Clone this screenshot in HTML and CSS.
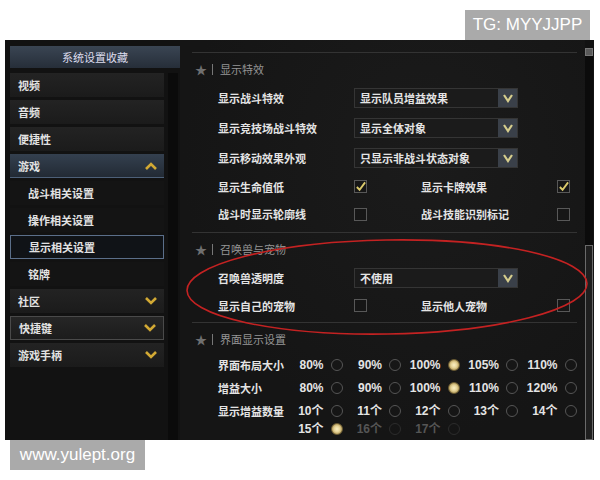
FILE: index.html
```html
<!DOCTYPE html>
<html lang="zh">
<head>
  <meta charset="UTF-8">
  <title>系统设置</title>
  <link rel="stylesheet" href="styles.css">
</head>
<body>
  <div class="top"><div class="tag">TG: MYYJJPP</div></div>

  <div class="game">
    <div class="sidebar">
      <div class="side-head">系统设置收藏</div>
      <div class="side-body">
        <div class="menu">
          <div class="item">视频</div>
          <div class="item">音频</div>
          <div class="item">便捷性</div>
          <div class="item open">游戏
            <svg class="chev" width="14" height="10" viewBox="0 0 14 10"><polyline points="2,8 7,3 12,8" fill="none" stroke="#d2a934" stroke-width="2.6"/></svg>
          </div>
          <div class="item sub">战斗相关设置</div>
          <div class="item sub">操作相关设置</div>
          <div class="item sub active">显示相关设置</div>
          <div class="item sub">铭牌</div>
          <div class="item">社区
            <svg class="chev" width="14" height="10" viewBox="0 0 14 10"><polyline points="2,2 7,7 12,2" fill="none" stroke="#d2a934" stroke-width="2.6"/></svg>
          </div>
          <div class="item hover">快捷键
            <svg class="chev" width="14" height="10" viewBox="0 0 14 10"><polyline points="2,2 7,7 12,2" fill="none" stroke="#d2a934" stroke-width="2.6"/></svg>
          </div>
          <div class="item">游戏手柄
            <svg class="chev" width="14" height="10" viewBox="0 0 14 10"><polyline points="2,2 7,7 12,2" fill="none" stroke="#d2a934" stroke-width="2.6"/></svg>
          </div>
        </div>
        <div class="track"></div>
      </div>
    </div>

    <div class="content">
      <div class="section">
        <div class="sec-head"><span class="star">★</span><span class="bar"></span>显示特效</div>
        <div class="rows">
          <div class="row">
            <span class="label">显示战斗特效</span>
            <div class="select"><span>显示队员增益效果</span><i class="sel-btn"><svg width="12" height="10" viewBox="0 0 12 10"><polyline points="2,2 6,8 10,2" fill="none" stroke="#d4cc8c" stroke-width="2.2"/></svg></i></div>
          </div>
          <div class="row">
            <span class="label">显示竞技场战斗特效</span>
            <div class="select"><span>显示全体对象</span><i class="sel-btn"><svg width="12" height="10" viewBox="0 0 12 10"><polyline points="2,2 6,8 10,2" fill="none" stroke="#d4cc8c" stroke-width="2.2"/></svg></i></div>
          </div>
          <div class="row">
            <span class="label">显示移动效果外观</span>
            <div class="select"><span>只显示非战斗状态对象</span><i class="sel-btn"><svg width="12" height="10" viewBox="0 0 12 10"><polyline points="2,2 6,8 10,2" fill="none" stroke="#d4cc8c" stroke-width="2.2"/></svg></i></div>
          </div>
          <div class="row short">
            <span class="label">显示生命值低</span>
            <span class="check on"><svg width="12" height="12" viewBox="0 0 12 12"><polyline points="2,6 5,9 11,1" fill="none" stroke="#dccb6c" stroke-width="2"/></svg></span>
            <span class="label second">显示卡牌效果</span>
            <span class="check on"><svg width="12" height="12" viewBox="0 0 12 12"><polyline points="2,6 5,9 11,1" fill="none" stroke="#dccb6c" stroke-width="2"/></svg></span>
          </div>
          <div class="row short">
            <span class="label">战斗时显示轮廓线</span>
            <span class="check"></span>
            <span class="label second">战斗技能识别标记</span>
            <span class="check"></span>
          </div>
        </div>
      </div>

      <div class="section">
        <div class="sec-head"><span class="star">★</span><span class="bar"></span>召唤兽与宠物</div>
        <div class="rows">
          <div class="row">
            <span class="label">召唤兽透明度</span>
            <div class="select"><span>不使用</span><i class="sel-btn"><svg width="12" height="10" viewBox="0 0 12 10"><polyline points="2,2 6,8 10,2" fill="none" stroke="#d4cc8c" stroke-width="2.2"/></svg></i></div>
          </div>
          <div class="row tiny">
            <span class="label">显示自己的宠物</span>
            <span class="check"></span>
            <span class="label second">显示他人宠物</span>
            <span class="check"></span>
          </div>
        </div>
      </div>

      <div class="section">
        <div class="sec-head"><span class="star">★</span><span class="bar"></span>界面显示设置</div>
        <div class="rows">
          <div class="radio-row">
            <span class="label">界面布局大小</span>
            <span class="opt">80%<i class="radio"></i></span>
            <span class="opt">90%<i class="radio"></i></span>
            <span class="opt">100%<i class="radio on"></i></span>
            <span class="opt">105%<i class="radio"></i></span>
            <span class="opt">110%<i class="radio"></i></span>
          </div>
          <div class="radio-row">
            <span class="label">增益大小</span>
            <span class="opt">80%<i class="radio"></i></span>
            <span class="opt">90%<i class="radio"></i></span>
            <span class="opt">100%<i class="radio on"></i></span>
            <span class="opt">110%<i class="radio"></i></span>
            <span class="opt">120%<i class="radio"></i></span>
          </div>
          <div class="radio-row">
            <span class="label">显示增益数量</span>
            <span class="opt">10个<i class="radio"></i></span>
            <span class="opt">11个<i class="radio"></i></span>
            <span class="opt">12个<i class="radio"></i></span>
            <span class="opt">13个<i class="radio"></i></span>
            <span class="opt">14个<i class="radio"></i></span>
          </div>
          <div class="radio-row last">
            <span class="label"></span>
            <span class="opt">15个<i class="radio on"></i></span>
            <span class="opt dim">16个<i class="radio"></i></span>
            <span class="opt dim">17个<i class="radio"></i></span>
          </div>
        </div>
      </div>
    </div>

    <div class="vscroll">
      <div class="up"></div>
      <div class="vtrack"><div class="thumb"></div></div>
    </div>

    <svg class="mark" width="589" height="400" viewBox="0 0 589 400">
      <ellipse cx="382" cy="247" rx="200" ry="47" transform="rotate(-1 382 247)" fill="none" stroke="#c42222" stroke-width="1.6"/>
    </svg>
  </div>

  <div class="foot">www.yulept.org</div>
</body>
</html>
```

FILE: styles.css
```css
*{box-sizing:border-box}
body{margin:0;background:#fff;width:600px;height:480px;overflow:hidden;font-family:"Noto Sans CJK SC","Liberation Sans",sans-serif}
.top{height:40px;display:flex;justify-content:flex-end;padding:10px 10px 0 0}
.tag,.foot{background:#aaa;color:#fff;font-family:"Liberation Sans",Arial,sans-serif;font-size:17px;height:30px;line-height:30px;text-align:center}
.tag{width:125px}
.foot{width:135px;margin-left:10px}

.game{position:relative;margin-left:5px;width:589px;height:400px;background:#121212;display:flex;overflow:hidden;color:#e4e4e4;font-size:11px;font-weight:700}
.mark{position:absolute;left:0;top:0;pointer-events:none}

/* colonne de gauche */
.sidebar{width:175px;padding:6px 0 0 5px;display:flex;flex-direction:column}
.side-head{height:22px;line-height:22px;text-align:center;background:linear-gradient(#3a4553,#262e39);color:#dde;font-weight:400}
.side-body{flex:1;display:flex;gap:4px;margin-top:5px}
.menu{width:154px;display:flex;flex-direction:column;gap:3px}
.item{height:24px;display:flex;align-items:center;justify-content:space-between;padding:0 6px 0 8px;background:linear-gradient(#232323,#1b1b1b);color:#e2e2e2}
.item.sub{padding-left:18px;background:#141414}
.item.open{background:linear-gradient(#34404f,#222a34);border-bottom:1px solid #4d6078}
.item.active{border:1px solid #5b6f8a;background:#101317}
.item.hover{border:1px solid #4a4a4a;background:linear-gradient(#262626,#1c1c1c)}
.track{width:10px;background:#0b0b0b}

/* panneau des réglages */
.content{flex:1;padding:12px 8px 0 12px;background:radial-gradient(ellipse at 60% 30%,#1b1b1b,#151515 70%)}
.section{border-top:1px solid #333;padding-top:6px}
.section+.section{margin-top:4px}
.sec-head{height:20px;display:flex;align-items:center;color:#959595;font-weight:400;padding-left:3px}
.star{color:#6f6f6f;font-size:12px}
.bar{width:1px;height:11px;background:#777;margin:0 7px 0 5px}
.rows{padding-left:26px;margin-top:4px}
.row{height:30px;display:flex;align-items:center}
.row.short{height:27px}
.row.short+.row.short{height:28px}
.row.tiny{height:25px}
.label{width:136px;flex-shrink:0}
.label.second{width:136px;margin-left:54px}
.select{width:164px;height:20px;display:flex;align-items:center;justify-content:space-between;background:#1b1b1b;border:1px solid #353535;padding-left:5px}
.sel-btn{width:19px;height:18px;background:#3a4049;display:flex;align-items:center;justify-content:center}
.check{width:13px;height:13px;border:1px solid #585858;background:#161616;display:flex;align-items:center;justify-content:center}
.check svg{display:block}

.radio-row{height:23px;display:grid;grid-template-columns:66px repeat(5,58.5px);align-items:center}
.radio-row.last{height:16px;align-items:start}
.radio-row .label{width:auto}
.opt{display:flex;justify-content:flex-end;align-items:center;gap:7px;height:14px;line-height:14px;font-family:"Liberation Sans","Noto Sans CJK SC",sans-serif;font-size:12px}
.opt.dim{color:#555}
.radio{width:12px;height:12px;border-radius:50%;border:1px solid #555;display:block}
.opt.dim .radio{border-color:#2c2c2c}
.radio.on{border:1px solid #6b5c34;background:radial-gradient(circle,#fbf0c4 0,#e6d498 40%,#b39a58 75%,#6a5830 100%)}

/* ascenseur droit */
.vscroll{width:8px;margin:8px 1px 0 0;display:flex;flex-direction:column}
.up{height:8px;background:#5a5a5a;border:1px solid #777}
.vtrack{flex:1;background:#0b0b0b;display:flex;flex-direction:column}
.thumb{margin-top:189px;flex:1;background:#1f1f1f;border:1px solid #6a6a6a}
```
